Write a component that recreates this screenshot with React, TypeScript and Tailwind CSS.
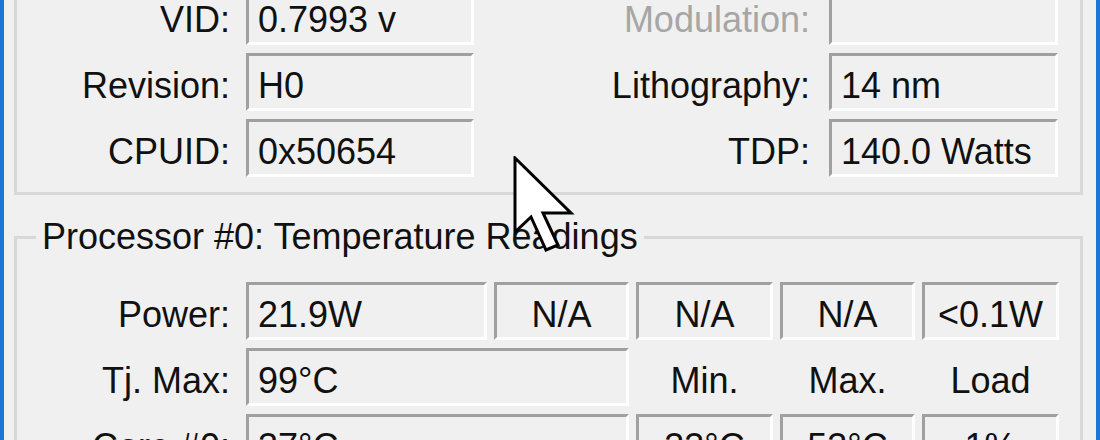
import React from "react";

// Sunken static field, Windows classic style (scaled 3x)
function Field({
  w,
  center,
  children,
}: {
  w: string;
  center?: boolean;
  children?: React.ReactNode;
}) {
  return (
    <div
      className={`h-[58px] ${w} shrink-0 border-[3px] border-t-[#a0a0a0] border-l-[#a0a0a0] border-b-white border-r-white flex items-center pt-[8px] ${
        center ? "justify-center" : "pl-[9px]"
      }`}
    >
      {children}
    </div>
  );
}

function Label({ children }: { children: React.ReactNode }) {
  return <div className="w-[213px] shrink-0 text-right pt-[8px]">{children}</div>;
}

export default function App() {
  const info = [
    { l: "VID:", v: "0.7993 v", r: "Modulation:", rv: "", dim: true },
    { l: "Revision:", v: "H0", r: "Lithography:", rv: "14 nm" },
    { l: "CPUID:", v: "0x50654", r: "TDP:", rv: "140.0 Watts" },
  ];

  return (
    <div
      className="w-[1100px] h-[440px] overflow-hidden bg-[#f0f0f0] flex text-[36px] leading-[40px] text-[#111]"
      style={{ fontFamily: '"Liberation Sans", Arial, sans-serif' }}
    >
      <div className="w-[4px] shrink-0 bg-[#1c76d6]" />

      <div className="flex-1 pl-[10px] pr-[13px] relative">
        {/* CPU info group (top cut off) */}
        <div className="-mt-[40px] border-[3px] border-[#d8d8d8] pt-[24px] pb-[15px] flex flex-col gap-[8px]">
          {info.map((row) => (
            <div key={row.l} className="flex items-center">
              <Label>{row.l}</Label>
              <div className="w-[16px] shrink-0" />
              <Field w="w-[228px]">{row.v}</Field>
              <div
                className={`w-[336px] shrink-0 text-right pt-[8px] ${row.dim ? "text-[#a6a6a6]" : ""}`}
              >
                {row.r}
              </div>
              <div className="w-[19px] shrink-0" />
              <Field w="w-[229px]">{row.rv}</Field>
            </div>
          ))}
        </div>

        {/* Temperature readings group */}
        <fieldset className="mt-[22px] border-[3px] border-solid border-[#d8d8d8] pt-[25px] min-w-0">
          <legend className="ml-[19px] px-[6px] leading-[40px]">
            Processor #0: Temperature Readings
          </legend>
          <div className="flex flex-col gap-[8px]">
            <div className="flex items-center">
              <Label>Power:</Label>
              <div className="w-[16px] shrink-0" />
              <div className="flex gap-[7px]">
                <Field w="w-[241px]">21.9W</Field>
                <Field w="w-[135px]" center>
                  N/A
                </Field>
                <Field w="w-[137px]" center>
                  N/A
                </Field>
                <Field w="w-[135px]" center>
                  N/A
                </Field>
                <Field w="w-[137px]" center>
                  &lt;0.1W
                </Field>
              </div>
            </div>

            <div className="flex items-center">
              <Label>Tj. Max:</Label>
              <div className="w-[16px] shrink-0" />
              <div className="flex gap-[7px] items-center">
                <Field w="w-[383px]">99°C</Field>
                <div className="w-[137px] text-center pt-[8px]">Min.</div>
                <div className="w-[135px] text-center pt-[8px]">Max.</div>
                <div className="w-[137px] text-center pt-[8px]">Load</div>
              </div>
            </div>

            <div className="flex items-center">
              <Label>Core #0:</Label>
              <div className="w-[16px] shrink-0" />
              <div className="flex gap-[7px]">
                <Field w="w-[383px]">37°C</Field>
                <Field w="w-[137px]" center>
                  33°C
                </Field>
                <Field w="w-[135px]" center>
                  53°C
                </Field>
                <Field w="w-[137px]" center>
                  1%
                </Field>
              </div>
            </div>
          </div>
        </fieldset>

        {/* mouse pointer over the group title */}
        <svg
          className="absolute left-[509px] top-[156px] z-10"
          width="64"
          height="104"
          viewBox="0 0 64 104"
        >
          <polygon
            points="2,2 2,76 18,61 33,94 45,89 30,57 58,57"
            fill="#fff"
            stroke="#000"
            strokeWidth="3"
            strokeLinejoin="miter"
          />
        </svg>
      </div>

      <div className="w-[4px] shrink-0 bg-[#1c76d6]" />
    </div>
  );
}
